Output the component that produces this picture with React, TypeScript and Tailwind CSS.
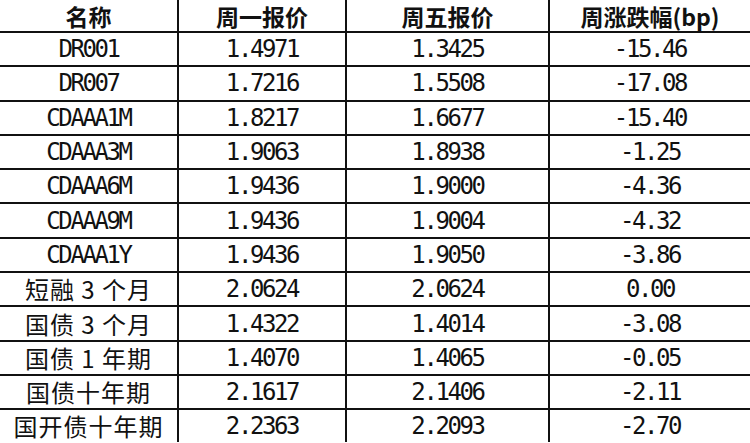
import React from 'react';

interface Row {
  name: string;
  mon: string;
  fri: string;
  chg: string;
}

const ROWS: Row[] = [
  { name: 'DR001', mon: '1.4971', fri: '1.3425', chg: '-15.46' },
  { name: 'DR007', mon: '1.7216', fri: '1.5508', chg: '-17.08' },
  { name: 'CDAAA1M', mon: '1.8217', fri: '1.6677', chg: '-15.40' },
  { name: 'CDAAA3M', mon: '1.9063', fri: '1.8938', chg: '-1.25' },
  { name: 'CDAAA6M', mon: '1.9436', fri: '1.9000', chg: '-4.36' },
  { name: 'CDAAA9M', mon: '1.9436', fri: '1.9004', chg: '-4.32' },
  { name: 'CDAAA1Y', mon: '1.9436', fri: '1.9050', chg: '-3.86' },
  { name: '短融 3 个月', mon: '2.0624', fri: '2.0624', chg: '0.00' },
  { name: '国债 3 个月', mon: '1.4322', fri: '1.4014', chg: '-3.08' },
  { name: '国债 1 年期', mon: '1.4070', fri: '1.4065', chg: '-0.05' },
  { name: '国债十年期', mon: '2.1617', fri: '2.1406', chg: '-2.11' },
  { name: '国开债十年期', mon: '2.2363', fri: '2.2093', chg: '-2.70' },
];

const mono = "font-['DejaVu_Sans_Mono','Noto_Sans_CJK_SC',monospace] text-[24px] tracking-[-2.4px]";
const cjk = "font-['Noto_Sans_CJK_SC',sans-serif] text-[24px] tracking-[1px]";
const cols = 'grid grid-cols-[179px_168px_203px_200px]';

const App: React.FC = () => {
  return (
    <div className="w-[750px] h-[443px] bg-white text-[#111] overflow-hidden">
      {/* Header */}
      <div className={`${cols} h-[33px] border-b-2 border-[#111]`}>
        {['名称', '周一报价', '周五报价', '周涨跌幅(bp)'].map((h, i) => (
          <div
            key={h}
            className={`flex items-center justify-center font-['Noto_Sans_CJK_SC',sans-serif] font-bold text-[23px] leading-[30px] ${
              i < 3 ? 'border-r-2 border-[#111]' : ''
            }`}
          >
            {h}
          </div>
        ))}
      </div>

      {/* Rows */}
      {ROWS.map((r, idx) => {
        const isCjk = /[\u4e00-\u9fff]/.test(r.name);
        return (
          <div
            key={r.name}
            className={`${cols} ${idx < ROWS.length - 1 ? 'h-[34.3px] border-b-2 border-[#111]' : 'h-[32px]'}`}
          >
            <div className={`flex items-center justify-center border-r-2 border-[#111] leading-[30px] ${isCjk ? cjk : mono}`}>
              {r.name}
            </div>
            <div className={`flex items-center justify-center border-r-2 border-[#111] leading-[30px] ${mono}`}>
              {r.mon}
            </div>
            <div className={`flex items-center justify-center border-r-2 border-[#111] leading-[30px] ${mono}`}>
              {r.fri}
            </div>
            <div className={`flex items-center justify-center leading-[30px] ${mono}`}>{r.chg}</div>
          </div>
        );
      })}
    </div>
  );
};

export default App;
